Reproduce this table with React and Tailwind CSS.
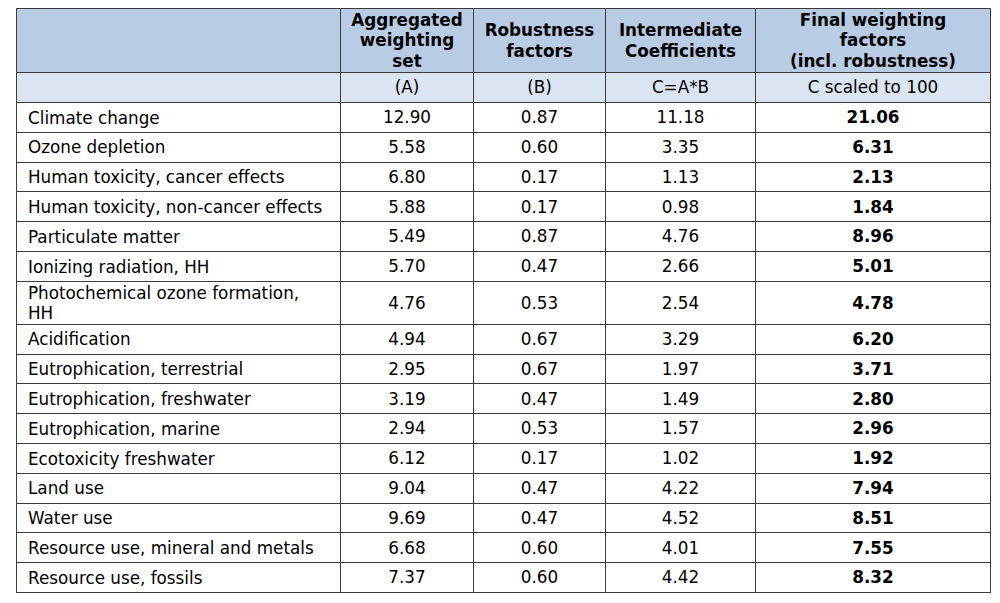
import React from "react";

const rows = [
  ["Climate change", "12.90", "0.87", "11.18", "21.06"],
  ["Ozone depletion", "5.58", "0.60", "3.35", "6.31"],
  ["Human toxicity, cancer effects", "6.80", "0.17", "1.13", "2.13"],
  ["Human toxicity, non-cancer effects", "5.88", "0.17", "0.98", "1.84"],
  ["Particulate matter", "5.49", "0.87", "4.76", "8.96"],
  ["Ionizing radiation, HH", "5.70", "0.47", "2.66", "5.01"],
  ["Photochemical ozone formation, HH", "4.76", "0.53", "2.54", "4.78", true],
  ["Acidification", "4.94", "0.67", "3.29", "6.20"],
  ["Eutrophication, terrestrial", "2.95", "0.67", "1.97", "3.71"],
  ["Eutrophication, freshwater", "3.19", "0.47", "1.49", "2.80"],
  ["Eutrophication, marine", "2.94", "0.53", "1.57", "2.96"],
  ["Ecotoxicity freshwater", "6.12", "0.17", "1.02", "1.92"],
  ["Land use", "9.04", "0.47", "4.22", "7.94"],
  ["Water use", "9.69", "0.47", "4.52", "8.51"],
  ["Resource use, mineral and metals", "6.68", "0.60", "4.01", "7.55"],
  ["Resource use, fossils", "7.37", "0.60", "4.42", "8.32"],
];

const cell = "border border-[#3c3c3c]";

export default function App() {
  return (
    <div
      className="w-[1000px] h-[603px] bg-white pt-[8px] pl-[16px] text-black"
      style={{ fontFamily: '"DejaVu Sans", Verdana, sans-serif' }}
    >
      <table className="border-collapse w-[974px] table-fixed text-[16.8px]">
        <colgroup>
          <col className="w-[324px]" />
          <col className="w-[133px]" />
          <col className="w-[132px]" />
          <col className="w-[150px]" />
          <col className="w-[235px]" />
        </colgroup>
        <thead>
          <tr className="h-[64px] bg-[#b8cce4] font-bold leading-[20.5px] text-center">
            <th className={cell}></th>
            <th className={cell}>
              Aggregated
              <br />
              weighting
              <br />
              set
            </th>
            <th className={cell}>
              Robustness
              <br />
              factors
            </th>
            <th className={cell}>
              Intermediate
              <br />
              Coefficients
            </th>
            <th className={cell}>
              Final weighting
              <br />
              factors
              <br />
              (incl. robustness)
            </th>
          </tr>
          <tr className="h-[30px] bg-[#dbe5f1] text-center font-normal">
            <td className={cell}></td>
            <td className={`${cell} pt-[1px]`}>(A)</td>
            <td className={`${cell} pt-[1px]`}>(B)</td>
            <td className={`${cell} pt-[1px]`}>C=A*B</td>
            <td className={`${cell} pt-[1px]`}>C scaled to 100</td>
          </tr>
        </thead>
        <tbody>
          {rows.map((r) => (
            <tr key={r[0]} className={r[5] ? "h-[42px]" : "h-[29.8px]"}>
              <td className={`${cell} pl-[11px] pt-[1px] leading-[20.5px]`}>
                {r[5] ? (
                  <>
                    Photochemical ozone formation,
                    <br />
                    HH
                  </>
                ) : (
                  r[0]
                )}
              </td>
              <td className={`${cell} pt-[1px] text-center`}>{r[1]}</td>
              <td className={`${cell} pt-[1px] text-center`}>{r[2]}</td>
              <td className={`${cell} pt-[1px] text-center`}>{r[3]}</td>
              <td className={`${cell} pt-[1px] text-center font-bold`}>{r[4]}</td>
            </tr>
          ))}
        </tbody>
      </table>
    </div>
  );
}
